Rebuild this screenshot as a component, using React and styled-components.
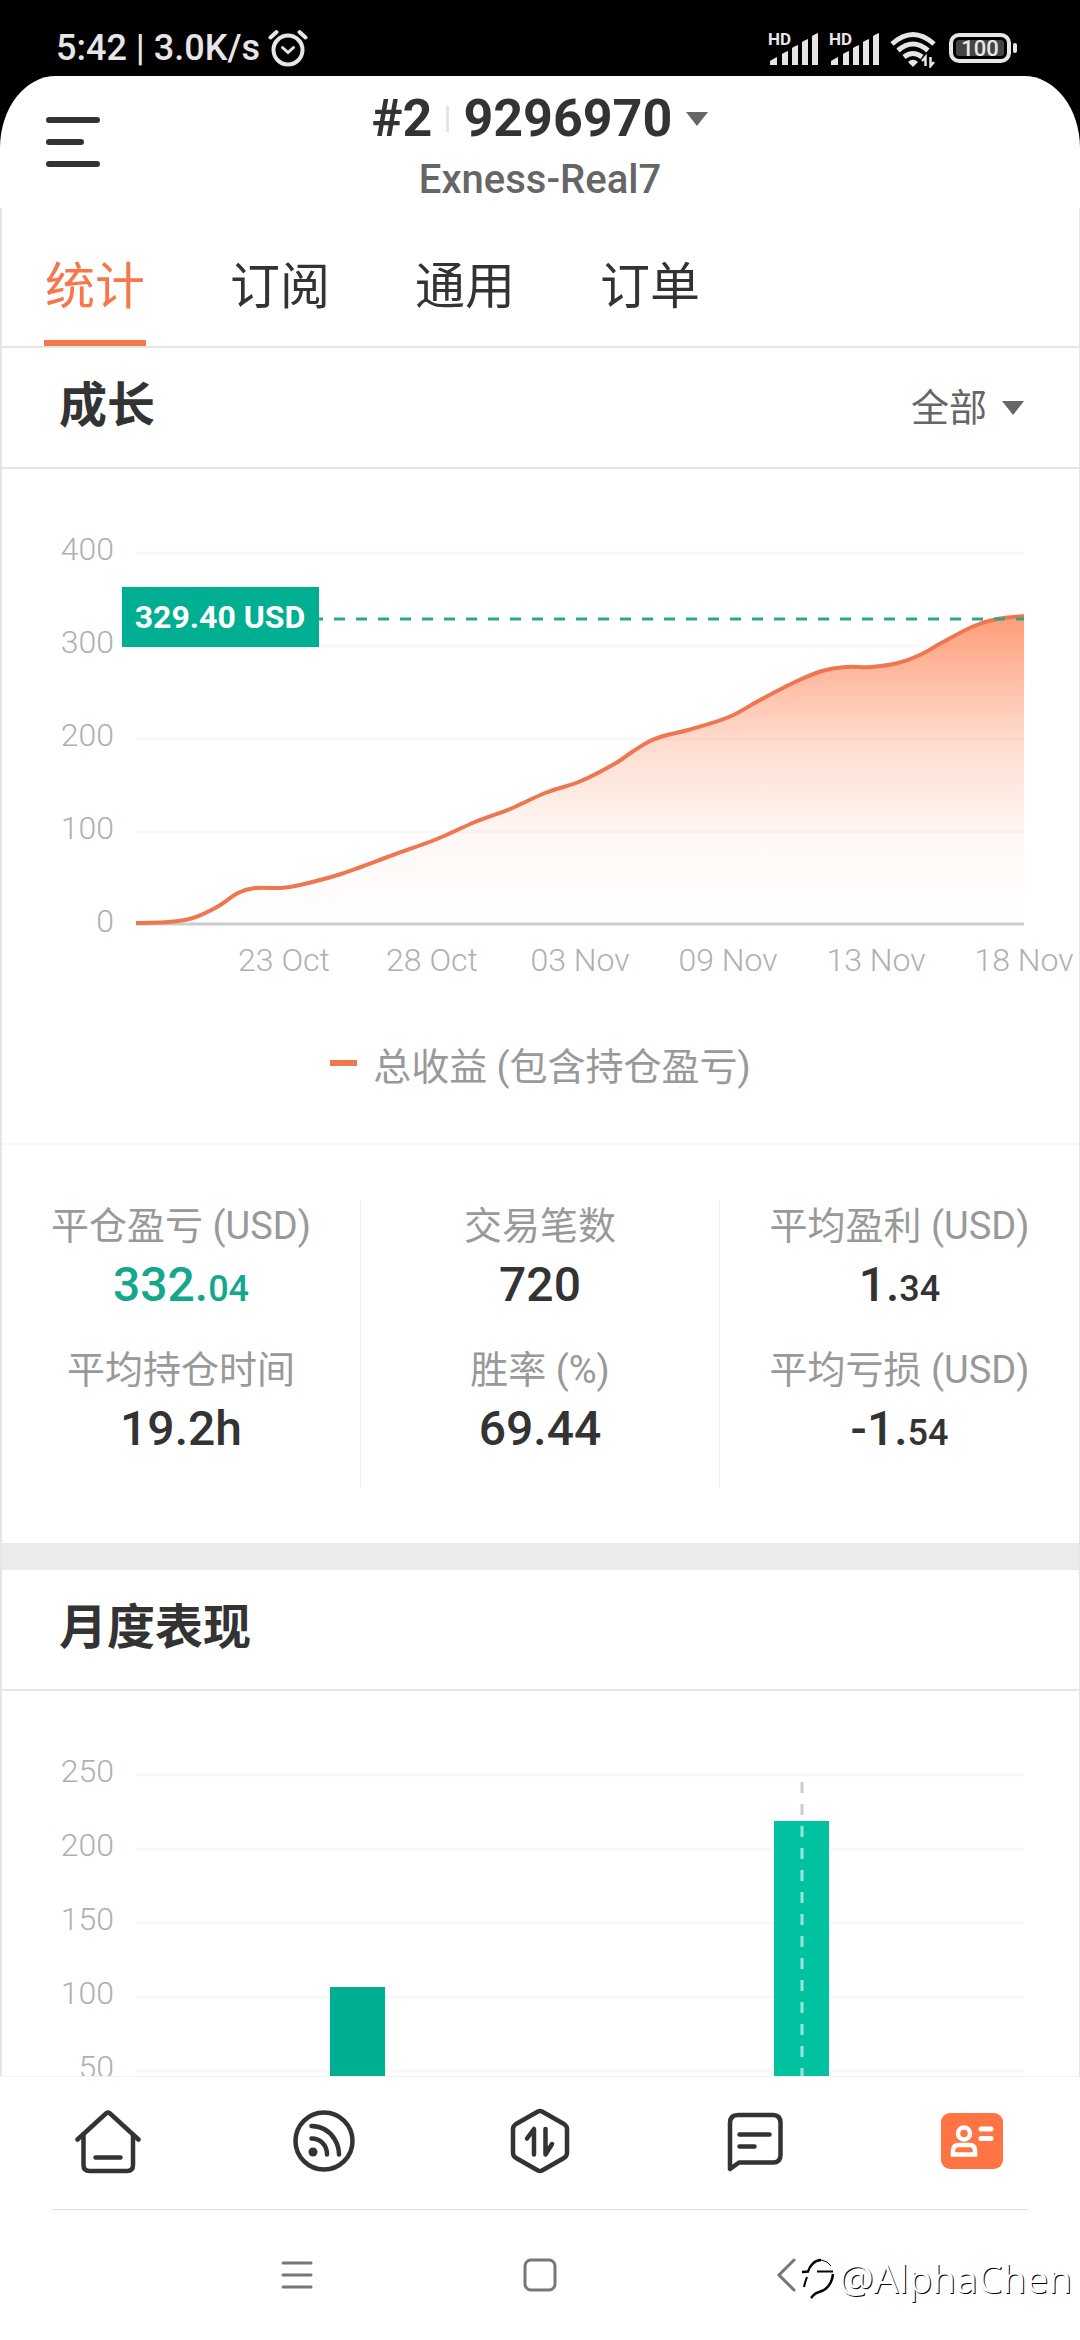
import React, { useState } from "react";
import styled, { createGlobalStyle } from "styled-components";

const GlobalStyle = createGlobalStyle`
  * {
    box-sizing: border-box;
    margin: 0;
    padding: 0;
  }
  body {
    background: #000;
    color: #333;
    font-family: "Roboto", "Noto Sans CJK SC", sans-serif;
  }
  button, select {
    border: none;
    background: none;
    color: inherit;
    font-family: inherit;
    cursor: pointer;
  }
  svg {
    display: block;
  }
`;

const Phone = styled.div`
  position: relative;
  display: flex;
  flex-direction: column;
  height: 100vh;
  overflow: hidden;
`;

const StatusBar = styled.div`
  display: flex;
  justify-content: space-between;
  align-items: center;
  height: 76px;
  padding: 20px 62px 0 56px;
  color: #e6e6e6;
  font-size: 36px;
  font-weight: 500;
  line-height: 56px;
`;

const StatusGroup = styled.div`
  display: flex;
  align-items: center;
  gap: ${({ $gap }) => $gap}px;
`;

const Screen = styled.div`
  display: flex;
  flex-direction: column;
  flex: 1;
  min-height: 0;
  background: #fff;
  border-radius: 56px 56px 0 0 / 72px 72px 0 0;
`;

const Header = styled.header`
  display: grid;
  grid-template-columns: 1fr auto 1fr;
  align-items: center;
  height: 132px;
  padding: 0 44px;
`;

const MenuButton = styled.button`
  width: 58px;
  height: 58px;
`;

const Account = styled.button`
  display: flex;
  flex-direction: column;
  align-items: center;
  padding-top: 10px;
`;

const AccountName = styled.span`
  display: flex;
  align-items: center;
  gap: 14px;
  font-size: 52px;
  font-weight: 700;
  line-height: 66px;
`;

const Separator = styled.span`
  width: 3px;
  height: 26px;
  background: #e5e5e5;
`;

const Server = styled.span`
  color: #666;
  font-size: 40px;
  font-weight: 500;
  line-height: 56px;
`;

const Content = styled.main`
  flex: 1;
  min-height: 0;
  overflow: hidden;
  border: solid #e5e5e5;
  border-width: 0 1px 0 2px;
`;

const Tabs = styled.nav`
  display: flex;
  gap: 83px;
  height: 140px;
  padding: 0 42px;
  border-bottom: 2px solid #e5e5e5;
`;

const Tab = styled.button`
  padding: 16px 1px 0;
  border-bottom: 6px solid ${({ $active }) => ($active ? "#f5774a" : "transparent")};
  color: ${({ $active }) => ($active ? "#f5774a" : "#333")};
  font-size: 50px;
`;

const SectionHeader = styled.div`
  display: flex;
  justify-content: space-between;
  align-items: center;
  height: 121px;
  padding: 0 55px 0 57px;
  border-bottom: 2px solid #e5e5e5;
`;

const SectionTitle = styled.h2`
  padding-bottom: 4px;
  font-size: 48px;
  font-weight: 700;
  line-height: 72px;
`;

const RangeLabel = styled.label`
  display: flex;
  align-items: center;
  gap: 14px;
  color: #666;
`;

const RangeSelect = styled.select`
  appearance: none;
  outline: none;
  font-size: 38px;
`;

const Chart = styled.svg`
  width: 100%;
  height: auto;
  overflow: visible;
  font-size: 32px;
  font-weight: 300;
`;

const Legend = styled.div`
  display: flex;
  justify-content: center;
  align-items: center;
  gap: 16px;
  height: 158px;
  padding-bottom: 4px;
  color: #999;
  font-size: 38px;
  border-bottom: 2px solid #f6f6f6;
`;

const LegendMark = styled.span`
  width: 27px;
  height: 6px;
  background: #ee7650;
`;

const Stats = styled.div`
  display: grid;
  grid-template-columns: repeat(3, 1fr);
  padding: 55px 0;
`;

const StatColumn = styled.dl`
  display: grid;
  grid-auto-rows: 144px;
  text-align: center;
  border-right: 1px solid #f0f0f0;

  &:last-child {
    border-right: none;
  }
`;

const StatLabel = styled.dt`
  color: #999;
  font-size: 38px;
  line-height: 52px;
`;

const StatValue = styled.dd`
  color: ${({ $positive }) => ($positive ? "#14a78c" : "#333")};
  font-size: 48px;
  font-weight: 500;
  line-height: 66px;

  small {
    font-size: 36px;
  }
`;

const Band = styled.div`
  height: 27px;
  background: #eaebed;
`;

const BottomNav = styled.nav`
  display: grid;
  grid-template-columns: repeat(5, 1fr);
  grid-template-rows: 132px 1px;
  height: 134px;
  background: #fff;
  border-top: 1px solid #f3f3f3;

  &::after {
    content: "";
    grid-column: 1 / -1;
    margin: 0 52px;
    background: #e0e0e0;
  }
`;

const NavButton = styled.button`
  display: flex;
  justify-content: center;
  align-items: center;
  padding-bottom: 4px;
`;

const SystemNav = styled.nav`
  display: grid;
  grid-template-columns: repeat(3, 243px);
  justify-content: center;
  height: 130px;
  background: #fff;
`;

const SystemButton = styled.button`
  display: flex;
  justify-content: center;
  align-items: center;
`;

const Watermark = styled.div`
  position: absolute;
  right: 8px;
  bottom: 34px;
  display: flex;
  align-items: center;
  gap: 3px;
  color: #fff;
  font-family: "Open Sans", sans-serif;
  font-size: 39px;
  font-weight: 400;
  line-height: 56px;
  text-shadow: 1px 1px 0 #000;
`;

const Caret = () => (
  <svg width="22" height="14" viewBox="0 0 22 14" fill="#666">
    <path d="M0 0H22L11 14Z" />
  </svg>
);

const Signal = () => (
  <svg width="50" height="40" viewBox="0 0 50 40" fill="#e6e6e6">
    <text x="0" y="17" fontSize="17" fontWeight="700">
      HD
    </text>
    <path d="M2 37V33Q5 31 9 29V37ZM14 37V26Q17 24 20 23V37ZM24 37V20Q27 18 30 17V37ZM34 37V14Q37 12 40 11V37ZM44 37V8Q47 6 50 5V37Z" />
  </svg>
);

const Alarm = () => (
  <svg width="40" height="40" viewBox="0 0 40 40" fill="none" stroke="#e6e6e6" strokeWidth="4" strokeLinecap="round">
    <circle cx="20" cy="22" r="14.5" />
    <path d="M2.5 9.5L8.5 4M37.5 9.5L31.5 4" />
    <path d="M14.5 19.5L20 24.5L25.5 19.5" strokeWidth="3" />
  </svg>
);

const Wifi = () => (
  <svg width="46" height="40" viewBox="0 0 46 40" fill="none" stroke="#e6e6e6" strokeWidth="5">
    <path d="M2 16Q23 -3 44 16" />
    <path d="M8 22.5Q23 9.5 38 22.5" />
    <path d="M14 29Q23 22 32 29" />
    <path d="M18 34Q23 29.5 28 34L23 39Z" fill="#e6e6e6" stroke="none" />
    <path d="M35.5 38V29L32 33M40.5 29V38L44 34" strokeWidth="2.5" />
  </svg>
);

const Battery = () => (
  <svg width="71" height="32" viewBox="-2 0 71 32">
    <rect x="2" y="3" width="58" height="26" rx="8" fill="none" stroke="#e6e6e6" strokeWidth="4" />
    <rect x="7" y="8" width="48" height="16" rx="3" fill="#444" />
    <rect x="64" y="11" width="4" height="10" rx="2" fill="#e6e6e6" />
    <text x="31" y="24" fill="#e6e6e6" fontSize="22" fontWeight="500" textAnchor="middle">
      100
    </text>
  </svg>
);

const HomeIcon = () => (
  <svg width="66" height="66" viewBox="0 0 66 66" fill="none" stroke="#333" strokeWidth="4.5" strokeLinecap="round" strokeLinejoin="round">
    <path d="M2.5 31.5L31.5 5Q33 4 34.5 5L63.5 31.5" />
    <path d="M8.5 27V57Q8.5 63 14.5 63H52Q58 63 58 57V27" />
    <path d="M20.5 49.5H45.5" />
  </svg>
);

const FeedIcon = () => (
  <svg width="66" height="66" viewBox="0 0 66 66" fill="none" stroke="#333" strokeWidth="4.5" strokeLinecap="round">
    <circle cx="33" cy="33" r="28.5" />
    <path d="M20.5 18Q36 18.5 43.5 31Q48 38.5 48 46.5" />
    <path d="M20.5 30.5C29 30.5 36 37 36 46.5" />
    <circle cx="22" cy="44" r="4.5" fill="#333" stroke="none" />
  </svg>
);

const TradeIcon = () => (
  <svg width="66" height="66" viewBox="0 0 66 66" fill="none" stroke="#333" strokeWidth="4.5" strokeLinecap="round" strokeLinejoin="round">
    <path d="M31 3.5Q33 2.5 35 3.5L57 16Q60 18 60 21V45Q60 48 57 50L35 62.5Q33 63.5 31 62.5L9 50Q6 48 6 45V21Q6 18 9 16Z" />
    <path d="M20 30.5L27 21V46.5M38.5 21V46.5L45 36" />
  </svg>
);

const ChatIcon = () => (
  <svg width="66" height="66" viewBox="0 0 66 66" fill="none" stroke="#333" strokeWidth="4.5" strokeLinecap="round" strokeLinejoin="round">
    <path d="M7 61V15Q7 7 15 7H50Q57.5 7 57.5 15V47Q57.5 54.5 50 54.5H16Z" />
    <path d="M16.5 26.5H46.5M16.5 38.5H31.5" />
  </svg>
);

const ProfileIcon = () => (
  <svg width="66" height="66" viewBox="0 0 66 66" fill="none" stroke="#fff">
    <rect x="2" y="5" width="62" height="56" rx="9" fill="#ff7442" stroke="none" />
    <circle cx="25" cy="25.5" r="6" strokeWidth="4.5" />
    <path d="M14 46.5V43Q14 37 20 37H30.5Q36 37 36 43V46.5Z" strokeWidth="4.5" />
    <path d="M42 21H52M42 30.5H52" strokeWidth="5" strokeLinecap="round" />
  </svg>
);

const tabs = ["统计", "订阅", "通用", "订单"];

const stats = [
  [
    { label: "平仓盈亏 (USD)", value: "332.", decimals: "04", positive: true },
    { label: "平均持仓时间", value: "19.2h" },
  ],
  [
    { label: "交易笔数", value: "720" },
    { label: "胜率 (%)", value: "69.44" },
  ],
  [
    { label: "平均盈利 (USD)", value: "1.", decimals: "34" },
    { label: "平均亏损 (USD)", value: "-1.", decimals: "54" },
  ],
];

const navItems = [
  { name: "首页", Icon: HomeIcon },
  { name: "动态", Icon: FeedIcon },
  { name: "交易", Icon: TradeIcon },
  { name: "消息", Icon: ChatIcon },
  { name: "我的", Icon: ProfileIcon },
];

const dates = ["23 Oct", "28 Oct", "03 Nov", "09 Nov", "13 Nov", "18 Nov"];

// [x, y] in chart units, the zero line is at y = 455
const growth = [
  [134, 454], [167, 453], [191, 449], [215, 438], [236, 424], [253, 419],
  [279, 419], [298, 416], [339, 405], [391, 386], [435, 370], [473, 353],
  [508, 340], [543, 324], [579, 312], [614, 294], [630, 283], [648, 272],
  [665, 266], [686, 261], [727, 248], [758, 231], [793, 213], [820, 202],
  [844, 198], [869, 198], [896, 194], [920, 185], [941, 173], [972, 157],
  [995, 150], [1022, 147],
];

// Catmull-Rom spline through the points
const smoothPath = (points) =>
  points.reduce((path, [x, y], i) => {
    if (i === 0) return `M${x} ${y}`;
    const before = points[i - 2] || points[i - 1];
    const from = points[i - 1];
    const after = points[i + 1] || points[i];
    const c1 = [from[0] + (x - before[0]) / 6, from[1] + (y - before[1]) / 6];
    const c2 = [x - (after[0] - from[0]) / 6, y - (after[1] - from[1]) / 6];
    return `${path}C${c1.join(" ")} ${c2.join(" ")} ${x} ${y}`;
  }, "");

const GrowthChart = () => {
  const line = smoothPath(growth);
  return (
    <Chart viewBox="0 0 1077 518" role="img" aria-label="成长">
      <defs>
        <linearGradient id="fill" gradientUnits="userSpaceOnUse" x1="0" y1="147" x2="0" y2="455">
          <stop offset="0" stopColor="#ff7744" stopOpacity="0.72" />
          <stop offset="0.4" stopColor="#ff7744" stopOpacity="0.27" />
          <stop offset="0.7" stopColor="#ff7744" stopOpacity="0.06" />
          <stop offset="1" stopColor="#ff7744" stopOpacity="0" />
        </linearGradient>
      </defs>
      {[400, 300, 200, 100, 0].map((tick, i) => (
        <g key={tick}>
          <text x="112" y={91 + i * 93} fill="#b0b0b0" textAnchor="end">
            {tick}
          </text>
          {tick > 0 && <path d={`M134 ${84 + i * 93}H1022`} stroke="#f8f8f8" strokeWidth="3" />}
        </g>
      ))}
      <path d="M134 455H1022" stroke="#ccc" strokeWidth="3" />
      <path d={`${line}V455H134Z`} fill="url(#fill)" />
      <path d={line} fill="none" stroke="#ee7650" strokeWidth="4" />
      <path d="M310 150H1022" stroke="#2aa88f" strokeWidth="3" strokeDasharray="11 11" />
      <rect x="120" y="118" width="197" height="60" fill="#00ae92" />
      <text x="218" y="159" fill="#fff" fontWeight="700" textAnchor="middle">
        329.40 USD
      </text>
      {dates.map((date, i) => (
        <text key={date} x={282 + i * 148} y="502" fill="#b0b0b0" textAnchor="middle">
          {date}
        </text>
      ))}
    </Chart>
  );
};

const MonthlyChart = () => (
  <Chart viewBox="0 0 1077 500" role="img" aria-label="月度表现">
    {[250, 200, 150, 100, 50].map((tick, i) => (
      <g key={tick}>
        <text x="112" y={91 + i * 74} fill="#b0b0b0" textAnchor="end">
          {tick}
        </text>
        <path d={`M134 ${84 + i * 74}H1022`} stroke="#f8f8f8" strokeWidth="3" />
      </g>
    ))}
    <path d="M134 455H1022" stroke="#ccc" strokeWidth="3" />
    <rect x="328" y="296" width="55" height="159" fill="#00ae92" />
    <path d="M800 91V130" stroke="#ccc" strokeWidth="3" strokeDasharray="11 11" />
    <rect x="772" y="130" width="55" height="325" fill="#00c1a0" />
    <path d="M800 135V455" stroke="#fff" strokeOpacity="0.6" strokeWidth="3" strokeDasharray="11 11" />
  </Chart>
);

const App = () => {
  const [active, setActive] = useState("统计");

  return (
    <Phone>
      <GlobalStyle />
      <StatusBar>
        <StatusGroup $gap={8}>
          <span>5:42 | 3.0K/s</span>
          <Alarm />
        </StatusGroup>
        <StatusGroup $gap={11}>
          <Signal />
          <Signal />
          <Wifi />
          <Battery />
        </StatusGroup>
      </StatusBar>
      <Screen>
        <Header>
          <MenuButton aria-label="菜单">
            <svg width="58" height="58" viewBox="0 0 58 58" stroke="#333" strokeWidth="6" strokeLinecap="round">
              <path d="M5 7H53M5 29H37M5 51H53" />
            </svg>
          </MenuButton>
          <Account aria-haspopup="listbox">
            <AccountName>
              #2
              <Separator />
              9296970
              <Caret />
            </AccountName>
            <Server>Exness-Real7</Server>
          </Account>
        </Header>
        <Content>
          <Tabs>
            {tabs.map((tab) => (
              <Tab key={tab} $active={tab === active} onClick={() => setActive(tab)}>
                {tab}
              </Tab>
            ))}
          </Tabs>
          <section>
            <SectionHeader>
              <SectionTitle>成长</SectionTitle>
              <RangeLabel>
                <RangeSelect aria-label="时间范围">
                  <option>全部</option>
                </RangeSelect>
                <Caret />
              </RangeLabel>
            </SectionHeader>
            <GrowthChart />
            <Legend>
              <LegendMark />
              总收益 (包含持仓盈亏)
            </Legend>
            <Stats>
              {stats.map((column) => (
                <StatColumn key={column[0].label}>
                  {column.map(({ label, value, decimals, positive }) => (
                    <div key={label}>
                      <StatLabel>{label}</StatLabel>
                      <StatValue $positive={positive}>
                        {value}
                        {decimals && <small>{decimals}</small>}
                      </StatValue>
                    </div>
                  ))}
                </StatColumn>
              ))}
            </Stats>
          </section>
          <Band />
          <section>
            <SectionHeader>
              <SectionTitle>月度表现</SectionTitle>
            </SectionHeader>
            <MonthlyChart />
          </section>
        </Content>
        <BottomNav>
          {navItems.map(({ name, Icon }) => (
            <NavButton key={name} aria-label={name}>
              <Icon />
            </NavButton>
          ))}
        </BottomNav>
        <SystemNav>
          <SystemButton aria-label="最近任务">
            <svg width="34" height="34" viewBox="0 0 34 34" stroke="#777" strokeWidth="3" strokeLinecap="round">
              <path d="M3 5H31M3 17H31M3 29H31" />
            </svg>
          </SystemButton>
          <SystemButton aria-label="主屏幕">
            <svg width="34" height="34" viewBox="0 0 34 34" fill="none" stroke="#777" strokeWidth="3">
              <rect x="2" y="2" width="30" height="30" rx="6" />
            </svg>
          </SystemButton>
          <SystemButton aria-label="返回">
            <svg width="34" height="34" viewBox="0 0 34 34" fill="none" stroke="#777" strokeWidth="3" strokeLinecap="round">
              <path d="M28 2L13 17L28 32" />
            </svg>
          </SystemButton>
        </SystemNav>
      </Screen>
      <Watermark>
        <svg width="36" height="44" viewBox="0 0 36 44" fill="none" stroke="#000" strokeWidth="2.5">
          <path d="M2 16L8 15.5C10 9 15 4 21 4" />
          <path d="M21 4Q28 5 31 10" strokeWidth="1" />
          <path d="M17 15.5H33M7 21Q5 26 4 31" strokeWidth="2" />
          <path d="M33 18C32 27 27 34 19 36C14 37 14 39 11 42" />
        </svg>
        @AlphaChen
      </Watermark>
    </Phone>
  );
};

export default App;
